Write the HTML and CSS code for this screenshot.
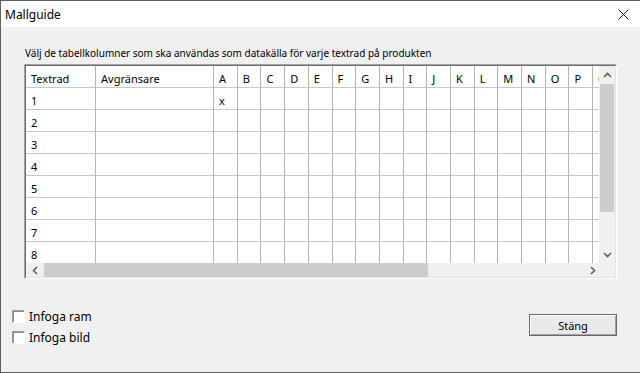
FILE: index.html
```html
<!DOCTYPE html>
<html lang="sv">
<head>
    <meta charset="UTF-8">
    <title>Mallguide</title>
    <link rel="stylesheet" href="styles.css">
</head>
<body>

<div class="window">
    <div class="titlebar">
        <span class="title">Mallguide</span>
        <svg class="close" width="11" height="11" viewBox="0 0 11 11">
            <path d="M0.5 0.5 L10.5 10.5 M10.5 0.5 L0.5 10.5" stroke="#111" stroke-width="1" fill="none"/>
        </svg>
    </div>

    <div class="content">
        <p class="intro">Välj de tabellkolumner som ska användas som datakälla för varje textrad på produkten</p>

        <div class="grid">
            <div class="grid-inner">
                <div class="grid-main">
                    <div class="cells">
                        <table class="sheet">
                            <colgroup>
                                <col class="col-row">
                                <col class="col-sep">
                                <col class="col-letter"><col class="col-letter"><col class="col-letter"><col class="col-letter">
                                <col class="col-letter"><col class="col-letter"><col class="col-letter"><col class="col-letter">
                                <col class="col-letter"><col class="col-letter"><col class="col-letter"><col class="col-letter">
                                <col class="col-letter"><col class="col-letter"><col class="col-letter"><col class="col-letter">
                                <col class="col-letter">
                            </colgroup>
                            <thead>
                                <tr><th>Textrad</th><th>Avgränsare</th><th>A</th><th>B</th><th>C</th><th>D</th><th>E</th><th>F</th><th>G</th><th>H</th><th>I</th><th>J</th><th>K</th><th>L</th><th>M</th><th>N</th><th>O</th><th>P</th><th>Q</th></tr>
                            </thead>
                            <tbody>
                                <tr><td>1</td><td></td><td>x</td><td></td><td></td><td></td><td></td><td></td><td></td><td></td><td></td><td></td><td></td><td></td><td></td><td></td><td></td><td></td><td></td></tr>
                                <tr><td>2</td><td></td><td></td><td></td><td></td><td></td><td></td><td></td><td></td><td></td><td></td><td></td><td></td><td></td><td></td><td></td><td></td><td></td><td></td></tr>
                                <tr><td>3</td><td></td><td></td><td></td><td></td><td></td><td></td><td></td><td></td><td></td><td></td><td></td><td></td><td></td><td></td><td></td><td></td><td></td><td></td></tr>
                                <tr><td>4</td><td></td><td></td><td></td><td></td><td></td><td></td><td></td><td></td><td></td><td></td><td></td><td></td><td></td><td></td><td></td><td></td><td></td><td></td></tr>
                                <tr><td>5</td><td></td><td></td><td></td><td></td><td></td><td></td><td></td><td></td><td></td><td></td><td></td><td></td><td></td><td></td><td></td><td></td><td></td><td></td></tr>
                                <tr><td>6</td><td></td><td></td><td></td><td></td><td></td><td></td><td></td><td></td><td></td><td></td><td></td><td></td><td></td><td></td><td></td><td></td><td></td><td></td></tr>
                                <tr><td>7</td><td></td><td></td><td></td><td></td><td></td><td></td><td></td><td></td><td></td><td></td><td></td><td></td><td></td><td></td><td></td><td></td><td></td><td></td></tr>
                                <tr><td>8</td><td></td><td></td><td></td><td></td><td></td><td></td><td></td><td></td><td></td><td></td><td></td><td></td><td></td><td></td><td></td><td></td><td></td><td></td></tr>
                            </tbody>
                        </table>
                    </div>

                    <div class="vscroll">
                        <div class="sbtn">
                            <svg width="9" height="6" viewBox="0 0 9 6"><polyline points="1,5 4.5,1.5 8,5" fill="none" stroke="#606060" stroke-width="1.6"/></svg>
                        </div>
                        <div class="vtrack"><div class="vthumb"></div></div>
                        <div class="sbtn">
                            <svg width="9" height="6" viewBox="0 0 9 6"><polyline points="1,1 4.5,4.5 8,1" fill="none" stroke="#606060" stroke-width="1.6"/></svg>
                        </div>
                    </div>
                </div>

                <div class="hscroll">
                    <div class="sbtn">
                        <svg width="6" height="9" viewBox="0 0 6 9"><polyline points="5,1 1.5,4.5 5,8" fill="none" stroke="#606060" stroke-width="1.6"/></svg>
                    </div>
                    <div class="htrack"><div class="hthumb"></div></div>
                    <div class="sbtn">
                        <svg width="6" height="9" viewBox="0 0 6 9"><polyline points="1,1 4.5,4.5 1,8" fill="none" stroke="#606060" stroke-width="1.6"/></svg>
                    </div>
                    <div class="corner"></div>
                </div>
            </div>
        </div>
    </div>

    <div class="footer">
        <div class="options">
            <label class="check"><span class="box"></span>Infoga ram</label>
            <label class="check"><span class="box"></span>Infoga bild</label>
        </div>
        <button class="btn" type="button">Stäng</button>
    </div>
</div>

</body>
</html>
```

FILE: styles.css
```css
body {
    margin: 0;
    font-family: "Noto Sans", "Open Sans", sans-serif;
    font-size: 11px;
    color: #000;
    background-color: #fff;
}

.window {
    width: 640px;
    height: 373px;
    box-sizing: border-box;
    background-color: #f0f0f0;
    border-left: 1px solid #5f5f5f;
    border-top: 1px solid #5f5f5f;
    border-bottom: 1px solid #5f5f5f;
    display: flex;
    flex-direction: column;
}

.titlebar {
    height: 25px;
    flex-shrink: 0;
    background-color: #fff;
    display: flex;
    align-items: center;
    justify-content: space-between;
    padding: 1px 11px 0 4px;
}

.title {
    font-size: 12px;
}

.close {
    display: block;
}

.content {
    padding: 18px 23px 0 23px;
}

.intro {
    margin: 0 0 3px 1px;
    font-size: 10px;
    line-height: 16px;
}

/* рамка таблицы, утопленная */
.grid {
    border: 1px solid;
    border-color: #a0a0a0 #fff #fff #a0a0a0;
}

.grid-inner {
    border: 1px solid;
    border-color: #6e6e6e #e3e3e3 #e3e3e3 #6e6e6e;
    background-color: #f0f0f0;
}

.grid-main {
    display: flex;
    height: 197px;
}

.cells {
    width: 574px;
    overflow: hidden;
    background-color: #fff;
}

.sheet {
    table-layout: fixed;
    width: 591px;
    border-collapse: separate;
    border-spacing: 0;
}

.col-row {
    width: 70px;
}

.col-sep {
    width: 118px;
}

.col-letter {
    width: 23.69px;
}

.sheet th,
.sheet td {
    height: 16px;
    padding: 5px 0 0 5px;
    border-right: 1px solid #b4b4b4;
    border-bottom: 1px solid #c8c8c8;
    font-weight: normal;
    text-align: left;
    vertical-align: top;
    line-height: 16px;
    white-space: nowrap;
    overflow: hidden;
}

.vscroll {
    width: 16px;
    display: flex;
    flex-direction: column;
    background-color: #f0f0f0;
}

.sbtn {
    flex-shrink: 0;
    display: flex;
    align-items: center;
    justify-content: center;
}

.vscroll .sbtn {
    height: 17px;
}

.vtrack {
    flex: 1;
    padding: 1px 1px 0 1px;
}

.vthumb {
    height: 128px;
    background-color: #cdcdcd;
}

.hscroll {
    display: flex;
    height: 14px;
}

.hscroll .sbtn {
    width: 17px;
}

.htrack {
    width: 540px;
    padding: 0 0 0 1px;
}

.hthumb {
    width: 384px;
    height: 100%;
    background-color: #cdcdcd;
}

.corner {
    flex: 1;
    background-color: #f0f0f0;
}

.footer {
    display: flex;
    justify-content: space-between;
    align-items: flex-start;
    padding: 27px 23px 0 11px;
}

.options {
    display: flex;
    flex-direction: column;
}

.check {
    display: flex;
    align-items: center;
    height: 21px;
    font-size: 12px;
}

.box {
    width: 11px;
    height: 11px;
    margin-right: 4px;
    background-color: #fff;
    border: 1px solid;
    border-color: #a0a0a0 #fff #fff #a0a0a0;
    box-shadow: inset 1px 1px 0 #8a8a8a;
}

.btn {
    margin-top: 8px;
    width: 88px;
    height: 22px;
    font-family: inherit;
    font-size: 11px;
    color: #000;
    background-color: #e9e9e9;
    border: 1px solid #6a6a6a;
    box-shadow: inset 1px 1px 0 #fff, inset -1px -1px 0 #a0a0a0;
    padding: 0;
}
```
